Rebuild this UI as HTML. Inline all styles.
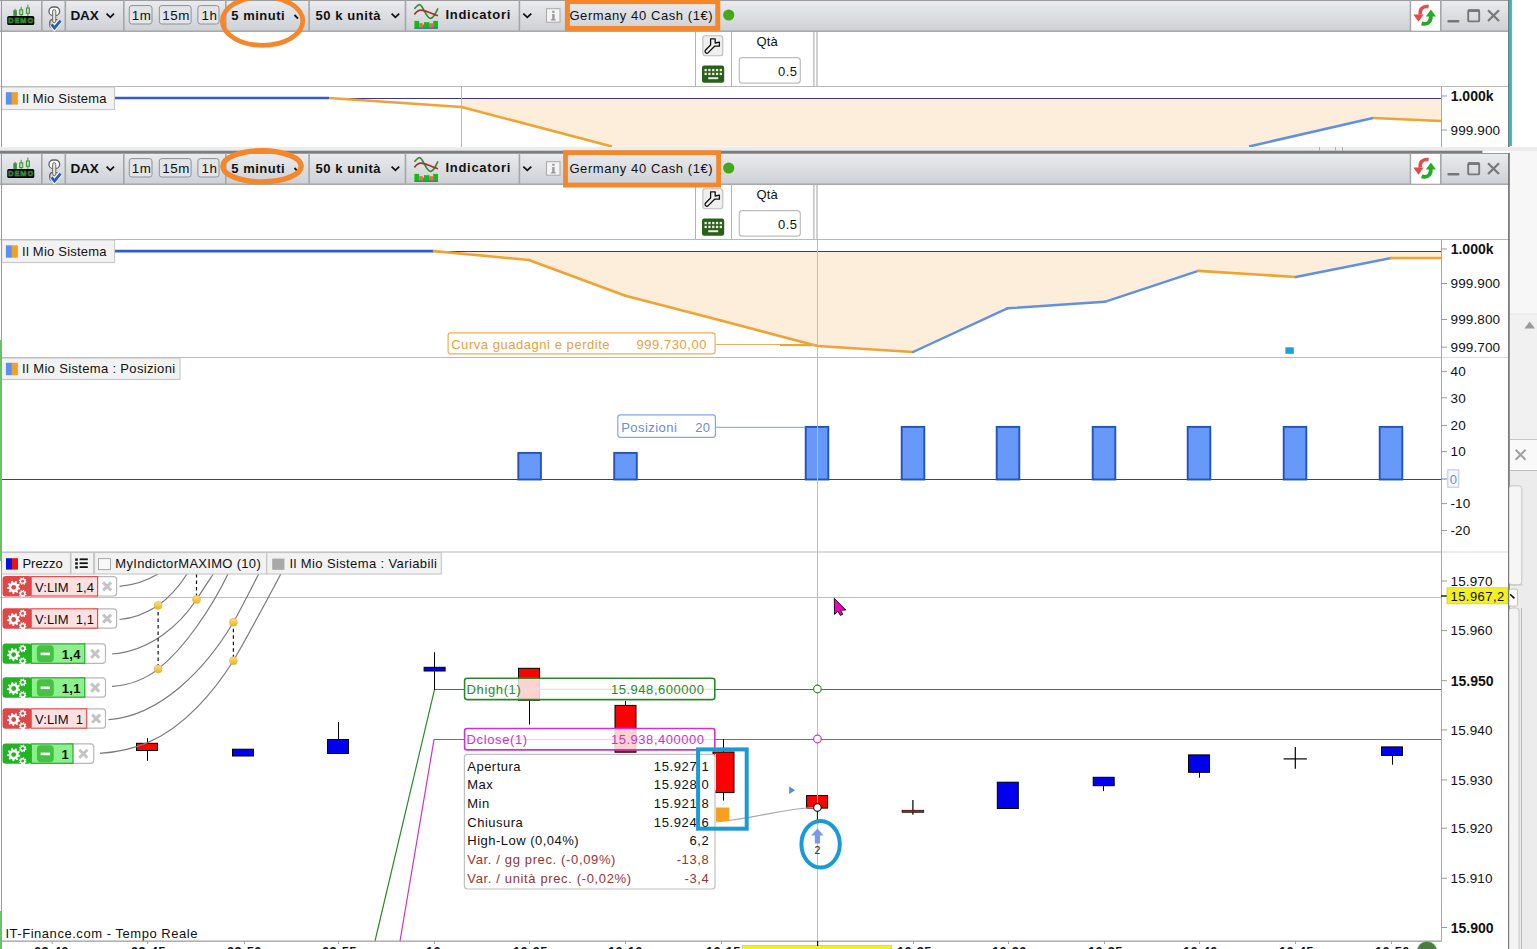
<!DOCTYPE html>
<html><head><meta charset="utf-8"><style>
html,body{margin:0;padding:0;width:1537px;height:949px;overflow:hidden;background:#fff;}
svg{position:absolute;display:block;}
text{font-family:"Liberation Sans",sans-serif;}
</style></head><body>
<div style="position:absolute;left:1510px;top:147px;width:27px;height:802px;background:#f3f3f3"></div>
<svg style="left:0;top:0" width="1537" height="147" viewBox="0 0 1537 147"><defs>
<linearGradient id="tbg" x1="0" y1="0" x2="0" y2="1"><stop offset="0" stop-color="#eaecef"/><stop offset="1" stop-color="#cdd0d4"/></linearGradient>
<linearGradient id="dot" x1="0" y1="0" x2="0" y2="1"><stop offset="0" stop-color="#ffe080"/><stop offset="1" stop-color="#f0b020"/></linearGradient>
</defs>
<rect x="0" y="0" width="1510" height="31.5" fill="url(#tbg)"/><rect x="0" y="0" width="1510" height="1" fill="#9c9c9c"/><rect x="0" y="30.6" width="1510" height="1.2" fill="#9a9a9a"/><rect x="41" y="0" width="1.6" height="31" fill="#a4a6a9"/><rect x="64.5" y="0" width="1.6" height="31" fill="#a4a6a9"/><rect x="123" y="0" width="1.6" height="31" fill="#a4a6a9"/><rect x="225" y="0" width="1.6" height="31" fill="#a4a6a9"/><rect x="308.3" y="0" width="1.6" height="31" fill="#a4a6a9"/><rect x="404.7" y="0" width="1.6" height="31" fill="#a4a6a9"/><rect x="518.6" y="0" width="1.6" height="31" fill="#a4a6a9"/><rect x="1409.7" y="0" width="1.6" height="31" fill="#a4a6a9"/><rect x="1440" y="0" width="1.6" height="31" fill="#a4a6a9"/><rect x="7.2" y="15.9" width="27.1" height="9.2" rx="1.6" fill="#0a0a0a"/><text x="21.2" y="23.4" font-size="7.4" font-weight="bold" fill="#1c3c1c" stroke="#3f963f" stroke-width="0.6" text-anchor="middle" letter-spacing="0.9">DEMO</text><rect x="14.6" y="8.8" width="1" height="7" fill="#3f8f3f"/><rect x="13.3" y="10.2" width="3.6" height="5.7" fill="#3f8f3f"/><rect x="20.7" y="6.8" width="1" height="9" fill="#3f8f3f"/><rect x="19.7" y="9.8" width="3" height="4.8" fill="#a8e8a0" stroke="#3f8f3f" stroke-width="1"/><rect x="27.4" y="4.6" width="1" height="11.2" fill="#3f8f3f"/><rect x="26.4" y="8" width="3" height="5.3" fill="#a8e8a0" stroke="#3f8f3f" stroke-width="1"/><rect x="49" y="7" width="10.6" height="8.6" rx="4.2" fill="#fff" stroke="#606060" stroke-width="1.3"/><path d="M57.5,19.6 L52,19.6 C49,19.6 49,27.6 52,27.6" fill="none" stroke="#606060" stroke-width="1.3"/><rect x="52.6" y="9.6" width="3.2" height="13" rx="1.6" fill="#e4e4dc" stroke="#707070" stroke-width="1"/><polyline points="51.6,24.4 54.5,28 60.6,20.6" fill="none" stroke="#fff" stroke-width="4.6"/><polyline points="51.6,24.4 54.5,28 60.6,20.6" fill="none" stroke="#2a5cbf" stroke-width="2.8"/><text x="70.5" y="19.8" font-size="13.6" font-weight="bold" fill="#111" letter-spacing="-0.25" xml:space="preserve">DAX</text><polyline points="106.6,13.6 110.3,17.3 114,13.6" fill="none" stroke="#111" stroke-width="1.8"/><rect x="129.3" y="5.6" width="22.69999999999999" height="18.4" rx="2.5" fill="#e2e4e7" stroke="#8e9093" stroke-width="1"/><text x="141.65" y="19.9" font-size="13.4" fill="#111" text-anchor="middle" letter-spacing="0.6" xml:space="preserve">1m</text><rect x="159.3" y="5.6" width="31.799999999999983" height="18.4" rx="2.5" fill="#e2e4e7" stroke="#8e9093" stroke-width="1"/><text x="176.2" y="19.9" font-size="13.4" fill="#111" text-anchor="middle" letter-spacing="0.6" xml:space="preserve">15m</text><rect x="197.9" y="5.6" width="21.099999999999994" height="18.4" rx="2.5" fill="#e2e4e7" stroke="#8e9093" stroke-width="1"/><text x="209.45" y="19.9" font-size="13.4" fill="#111" text-anchor="middle" letter-spacing="0.6" xml:space="preserve">1h</text><text x="231.3" y="19.9" font-size="13" font-weight="bold" fill="#111" letter-spacing="0.5" xml:space="preserve">5 minuti</text><polyline points="294.5,15 298,18.6" fill="none" stroke="#111" stroke-width="1.8"/><text x="315.6" y="19.9" font-size="13" font-weight="bold" fill="#111" letter-spacing="0.55" xml:space="preserve">50 k unità</text><polyline points="391.6,13.6 395.4,17.3 399.2,13.6" fill="none" stroke="#111" stroke-width="1.8"/><path d="M414.4,8.8 C416.5,6.5 418,4.7 419.5,4.7 C423,4.7 426,18.4 430.6,18.4 C434,18.4 436,12 438,8.4" fill="none" stroke="#2f8f2f" stroke-width="1.7"/><path d="M414.4,14.5 C416,12 418.5,10.1 421,10.1 C426,10.1 432,14.5 438,15.7" fill="none" stroke="#a83030" stroke-width="1.6"/><rect x="414.4" y="20.9" width="4.8" height="7" fill="#10c010"/><rect x="419.2" y="23.2" width="3.6" height="4.7" fill="#f06060"/><rect x="422.8" y="24.6" width="7" height="3.3" fill="#10c010"/><rect x="424" y="22.2" width="5.5" height="3" fill="#10c010"/><rect x="429.8" y="23.2" width="3.4" height="4.7" fill="#f06060"/><rect x="433.2" y="20.9" width="4.8" height="7" fill="#10c010"/><rect x="414.4" y="27.6" width="23.6" height="1.2" fill="#206a8a"/><text x="445.5" y="18.9" font-size="13" font-weight="bold" fill="#111" letter-spacing="0.7" xml:space="preserve">Indicatori</text><polyline points="523.3,13.6 527.3,17.3 531.3,13.6" fill="none" stroke="#111" stroke-width="1.8"/><rect x="546.5" y="8.7" width="13.5" height="13.5" fill="#f4f4f4" stroke="#a8a8a8" stroke-width="1"/><rect x="552.2" y="14" width="2.4" height="6.2" fill="#9a9a9a"/><rect x="552.2" y="10.8" width="2.4" height="2" fill="#9a9a9a"/><rect x="550.8" y="19.2" width="5" height="1.2" fill="#9a9a9a"/><text x="569.4" y="20" font-size="13" fill="#111" letter-spacing="0.58" xml:space="preserve">Germany 40 Cash (1€)</text><circle cx="728.7" cy="15" r="5.6" fill="#44a818"/><rect x="1411.3" y="1" width="28.7" height="29.6" fill="#fff"/><path d="M1428.6,6.6 C1422,5.6 1419.5,10 1420.4,14.6" fill="none" stroke="#e05050" stroke-width="3.6"/><polygon points="1413.4,14.6 1423.6,14.6 1418.5,21.8" fill="#e84848"/><path d="M1421.6,23.4 C1429,25.6 1431.6,20 1430.6,15" fill="none" stroke="#28a828" stroke-width="3.8"/><polygon points="1425.8,16.4 1436,16.4 1430.9,9.6" fill="#22b022"/><rect x="1447.4" y="20" width="12" height="2.4" rx="1" fill="#777"/><rect x="1468.2" y="10.2" width="11" height="11.2" rx="1" fill="none" stroke="#777" stroke-width="1.9"/><rect x="1468" y="9.4" width="11.4" height="2.6" fill="#777"/><path d="M1488,10.2 L1499,21 M1499,10.2 L1488,21" stroke="#777" stroke-width="2.2"/><rect x="695" y="31.5" width="1" height="55" fill="#b4b4b4"/><rect x="731" y="31.5" width="1" height="55" fill="#b4b4b4"/><rect x="813.3" y="31.5" width="1.2" height="55" fill="#b4b4b4"/><rect x="816.4" y="31.5" width="1.2" height="55" fill="#b4b4b4"/><rect x="0" y="86" width="1510" height="1" fill="#b8b8b8"/><rect x="702.8" y="35.8" width="20" height="20" rx="2.5" fill="#efefef" stroke="#bdbdbd" stroke-width="1.1"/><path d="M710.6,38.8 L715.2,38.8 L715.2,43 L719.4,42.2 L719.4,46.2 L714.6,46.2 L708.2,52.6 A1.7,1.7 0 0 1 705.6,50 L710.6,45 Z" fill="none" stroke="#111" stroke-width="1.3" stroke-linejoin="round"/><rect x="702" y="65.5" width="22.2" height="17.3" rx="2.2" fill="#2a5e1c"/><rect x="704.5" y="68.9" width="2.3" height="2.3" fill="#e8f0e0"/><rect x="708.3" y="68.9" width="2.3" height="2.3" fill="#e8f0e0"/><rect x="712.1" y="68.9" width="2.3" height="2.3" fill="#e8f0e0"/><rect x="715.9" y="68.9" width="2.3" height="2.3" fill="#e8f0e0"/><rect x="719.7" y="68.9" width="2.3" height="2.3" fill="#e8f0e0"/><rect x="704.5" y="72.8" width="2.3" height="2.3" fill="#e8f0e0"/><rect x="708.3" y="72.8" width="2.3" height="2.3" fill="#e8f0e0"/><rect x="712.1" y="72.8" width="2.3" height="2.3" fill="#e8f0e0"/><rect x="715.9" y="72.8" width="2.3" height="2.3" fill="#e8f0e0"/><rect x="719.7" y="72.8" width="2.3" height="2.3" fill="#e8f0e0"/><rect x="708.2" y="77.2" width="10" height="2" fill="#e8f0e0"/><text x="767.2" y="45.7" font-size="13" fill="#111" text-anchor="middle" letter-spacing="0.2" xml:space="preserve">Qtà</text><rect x="739.3" y="57.7" width="61" height="25.5" rx="3" fill="#fff" stroke="#bdbdbd" stroke-width="1.2"/><text x="797.6" y="75.7" font-size="13" fill="#111" text-anchor="end" letter-spacing="0.5" xml:space="preserve">0.5</text><polygon points="461.5,98 461.5,107 612,146.5 1249,146.5 1373,118 1441,121 1441,98" fill="#fdeedb"/><line x1="114" y1="98.5" x2="1441" y2="98.5" stroke="#3c3490" stroke-width="1"/><line x1="114" y1="98" x2="329" y2="98" stroke="#3558d0" stroke-width="2.6"/><polyline points="329,98 461.5,107 612,146.5" fill="none" stroke="#f0a232" stroke-width="2.6"/><polyline points="1249,146.5 1373,118" fill="none" stroke="#6090e0" stroke-width="2.6"/><polyline points="1373,118 1441,121" fill="none" stroke="#f0a232" stroke-width="2.6"/><line x1="461.5" y1="87" x2="461.5" y2="147" stroke="#e8a0a0" stroke-width="1"/><rect x="1441" y="87" width="1" height="60" fill="#a8a8a8"/><rect x="1441" y="95.5" width="6" height="1" fill="#999"/><text x="1450.7" y="101.1" font-size="14" font-weight="bold" fill="#111" xml:space="preserve">1.000k</text><rect x="1441" y="129.5" width="6" height="1" fill="#999"/><text x="1450.5" y="134.8" font-size="13.5" fill="#111" letter-spacing="0.12" xml:space="preserve">999.900</text><rect x="1.6" y="87" width="113" height="22.6" fill="#f2f2f2" stroke="#c2c2c2" stroke-width="1"/><rect x="5.9" y="92.2" width="6" height="12.4" fill="#5a90f0"/><rect x="11.9" y="92.2" width="6" height="12.4" fill="#f5a025"/><text x="22.1" y="103" font-size="13" fill="#111" letter-spacing="0.22" xml:space="preserve">Il Mio Sistema</text><rect x="1" y="0" width="1" height="147" fill="#9a9a9a"/><rect x="1508" y="0" width="1.8" height="147" fill="#7a7a7a"/>
<rect x="1509.2" y="0" width="2.7" height="146" fill="#2bc0ab"/>
</svg>
<svg style="left:0;top:147px" width="1537" height="6" viewBox="0 0 1537 6">
<rect x="0" y="0" width="1537" height="4" fill="#ececec"/>
<rect x="0" y="3.7" width="1482.4" height="2.4" fill="#7e7e7e"/>
<rect x="1319" y="0" width="1" height="4" fill="#b0b0b0"/><rect x="1335" y="0" width="1" height="4" fill="#b0b0b0"/><rect x="1342" y="0" width="1" height="4" fill="#b0b0b0"/>
</svg>
<svg style="left:0;top:153px" width="1537" height="796" viewBox="0 0 1537 796"><defs>
<linearGradient id="tbg2" x1="0" y1="0" x2="0" y2="1"><stop offset="0" stop-color="#eaecef"/><stop offset="1" stop-color="#cdd0d4"/></linearGradient>
<linearGradient id="dot2" x1="0" y1="0" x2="0" y2="1"><stop offset="0" stop-color="#ffe080"/><stop offset="1" stop-color="#f0b020"/></linearGradient>
</defs>
<rect x="0" y="0" width="1510" height="31.5" fill="url(#tbg2)"/><rect x="0" y="0" width="1510" height="1" fill="#9c9c9c"/><rect x="0" y="30.6" width="1510" height="1.2" fill="#9a9a9a"/><rect x="41" y="0" width="1.6" height="31" fill="#a4a6a9"/><rect x="64.5" y="0" width="1.6" height="31" fill="#a4a6a9"/><rect x="123" y="0" width="1.6" height="31" fill="#a4a6a9"/><rect x="225" y="0" width="1.6" height="31" fill="#a4a6a9"/><rect x="308.3" y="0" width="1.6" height="31" fill="#a4a6a9"/><rect x="404.7" y="0" width="1.6" height="31" fill="#a4a6a9"/><rect x="518.6" y="0" width="1.6" height="31" fill="#a4a6a9"/><rect x="1409.7" y="0" width="1.6" height="31" fill="#a4a6a9"/><rect x="1440" y="0" width="1.6" height="31" fill="#a4a6a9"/><rect x="7.2" y="15.9" width="27.1" height="9.2" rx="1.6" fill="#0a0a0a"/><text x="21.2" y="23.4" font-size="7.4" font-weight="bold" fill="#1c3c1c" stroke="#3f963f" stroke-width="0.6" text-anchor="middle" letter-spacing="0.9">DEMO</text><rect x="14.6" y="8.8" width="1" height="7" fill="#3f8f3f"/><rect x="13.3" y="10.2" width="3.6" height="5.7" fill="#3f8f3f"/><rect x="20.7" y="6.8" width="1" height="9" fill="#3f8f3f"/><rect x="19.7" y="9.8" width="3" height="4.8" fill="#a8e8a0" stroke="#3f8f3f" stroke-width="1"/><rect x="27.4" y="4.6" width="1" height="11.2" fill="#3f8f3f"/><rect x="26.4" y="8" width="3" height="5.3" fill="#a8e8a0" stroke="#3f8f3f" stroke-width="1"/><rect x="49" y="7" width="10.6" height="8.6" rx="4.2" fill="#fff" stroke="#606060" stroke-width="1.3"/><path d="M57.5,19.6 L52,19.6 C49,19.6 49,27.6 52,27.6" fill="none" stroke="#606060" stroke-width="1.3"/><rect x="52.6" y="9.6" width="3.2" height="13" rx="1.6" fill="#e4e4dc" stroke="#707070" stroke-width="1"/><polyline points="51.6,24.4 54.5,28 60.6,20.6" fill="none" stroke="#fff" stroke-width="4.6"/><polyline points="51.6,24.4 54.5,28 60.6,20.6" fill="none" stroke="#2a5cbf" stroke-width="2.8"/><text x="70.5" y="19.8" font-size="13.6" font-weight="bold" fill="#111" letter-spacing="-0.25" xml:space="preserve">DAX</text><polyline points="106.6,13.6 110.3,17.3 114,13.6" fill="none" stroke="#111" stroke-width="1.8"/><rect x="129.3" y="5.6" width="22.69999999999999" height="18.4" rx="2.5" fill="#e2e4e7" stroke="#8e9093" stroke-width="1"/><text x="141.65" y="19.9" font-size="13.4" fill="#111" text-anchor="middle" letter-spacing="0.6" xml:space="preserve">1m</text><rect x="159.3" y="5.6" width="31.799999999999983" height="18.4" rx="2.5" fill="#e2e4e7" stroke="#8e9093" stroke-width="1"/><text x="176.2" y="19.9" font-size="13.4" fill="#111" text-anchor="middle" letter-spacing="0.6" xml:space="preserve">15m</text><rect x="197.9" y="5.6" width="21.099999999999994" height="18.4" rx="2.5" fill="#e2e4e7" stroke="#8e9093" stroke-width="1"/><text x="209.45" y="19.9" font-size="13.4" fill="#111" text-anchor="middle" letter-spacing="0.6" xml:space="preserve">1h</text><text x="231.3" y="19.9" font-size="13" font-weight="bold" fill="#111" letter-spacing="0.5" xml:space="preserve">5 minuti</text><polyline points="294.5,15 298,18.6" fill="none" stroke="#111" stroke-width="1.8"/><text x="315.6" y="19.9" font-size="13" font-weight="bold" fill="#111" letter-spacing="0.55" xml:space="preserve">50 k unità</text><polyline points="391.6,13.6 395.4,17.3 399.2,13.6" fill="none" stroke="#111" stroke-width="1.8"/><path d="M414.4,8.8 C416.5,6.5 418,4.7 419.5,4.7 C423,4.7 426,18.4 430.6,18.4 C434,18.4 436,12 438,8.4" fill="none" stroke="#2f8f2f" stroke-width="1.7"/><path d="M414.4,14.5 C416,12 418.5,10.1 421,10.1 C426,10.1 432,14.5 438,15.7" fill="none" stroke="#a83030" stroke-width="1.6"/><rect x="414.4" y="20.9" width="4.8" height="7" fill="#10c010"/><rect x="419.2" y="23.2" width="3.6" height="4.7" fill="#f06060"/><rect x="422.8" y="24.6" width="7" height="3.3" fill="#10c010"/><rect x="424" y="22.2" width="5.5" height="3" fill="#10c010"/><rect x="429.8" y="23.2" width="3.4" height="4.7" fill="#f06060"/><rect x="433.2" y="20.9" width="4.8" height="7" fill="#10c010"/><rect x="414.4" y="27.6" width="23.6" height="1.2" fill="#206a8a"/><text x="445.5" y="18.9" font-size="13" font-weight="bold" fill="#111" letter-spacing="0.7" xml:space="preserve">Indicatori</text><polyline points="523.3,13.6 527.3,17.3 531.3,13.6" fill="none" stroke="#111" stroke-width="1.8"/><rect x="546.5" y="8.7" width="13.5" height="13.5" fill="#f4f4f4" stroke="#a8a8a8" stroke-width="1"/><rect x="552.2" y="14" width="2.4" height="6.2" fill="#9a9a9a"/><rect x="552.2" y="10.8" width="2.4" height="2" fill="#9a9a9a"/><rect x="550.8" y="19.2" width="5" height="1.2" fill="#9a9a9a"/><text x="569.4" y="20" font-size="13" fill="#111" letter-spacing="0.58" xml:space="preserve">Germany 40 Cash (1€)</text><circle cx="728.7" cy="15" r="5.6" fill="#44a818"/><rect x="1411.3" y="1" width="28.7" height="29.6" fill="#fff"/><path d="M1428.6,6.6 C1422,5.6 1419.5,10 1420.4,14.6" fill="none" stroke="#e05050" stroke-width="3.6"/><polygon points="1413.4,14.6 1423.6,14.6 1418.5,21.8" fill="#e84848"/><path d="M1421.6,23.4 C1429,25.6 1431.6,20 1430.6,15" fill="none" stroke="#28a828" stroke-width="3.8"/><polygon points="1425.8,16.4 1436,16.4 1430.9,9.6" fill="#22b022"/><rect x="1447.4" y="20" width="12" height="2.4" rx="1" fill="#777"/><rect x="1468.2" y="10.2" width="11" height="11.2" rx="1" fill="none" stroke="#777" stroke-width="1.9"/><rect x="1468" y="9.4" width="11.4" height="2.6" fill="#777"/><path d="M1488,10.2 L1499,21 M1499,10.2 L1488,21" stroke="#777" stroke-width="2.2"/><rect x="695" y="31.5" width="1" height="55" fill="#b4b4b4"/><rect x="731" y="31.5" width="1" height="55" fill="#b4b4b4"/><rect x="813.3" y="31.5" width="1.2" height="55" fill="#b4b4b4"/><rect x="816.4" y="31.5" width="1.2" height="55" fill="#b4b4b4"/><rect x="0" y="86" width="1510" height="1" fill="#b8b8b8"/><rect x="702.8" y="35.8" width="20" height="20" rx="2.5" fill="#efefef" stroke="#bdbdbd" stroke-width="1.1"/><path d="M710.6,38.8 L715.2,38.8 L715.2,43 L719.4,42.2 L719.4,46.2 L714.6,46.2 L708.2,52.6 A1.7,1.7 0 0 1 705.6,50 L710.6,45 Z" fill="none" stroke="#111" stroke-width="1.3" stroke-linejoin="round"/><rect x="702" y="65.5" width="22.2" height="17.3" rx="2.2" fill="#2a5e1c"/><rect x="704.5" y="68.9" width="2.3" height="2.3" fill="#e8f0e0"/><rect x="708.3" y="68.9" width="2.3" height="2.3" fill="#e8f0e0"/><rect x="712.1" y="68.9" width="2.3" height="2.3" fill="#e8f0e0"/><rect x="715.9" y="68.9" width="2.3" height="2.3" fill="#e8f0e0"/><rect x="719.7" y="68.9" width="2.3" height="2.3" fill="#e8f0e0"/><rect x="704.5" y="72.8" width="2.3" height="2.3" fill="#e8f0e0"/><rect x="708.3" y="72.8" width="2.3" height="2.3" fill="#e8f0e0"/><rect x="712.1" y="72.8" width="2.3" height="2.3" fill="#e8f0e0"/><rect x="715.9" y="72.8" width="2.3" height="2.3" fill="#e8f0e0"/><rect x="719.7" y="72.8" width="2.3" height="2.3" fill="#e8f0e0"/><rect x="708.2" y="77.2" width="10" height="2" fill="#e8f0e0"/><text x="767.2" y="45.7" font-size="13" fill="#111" text-anchor="middle" letter-spacing="0.2" xml:space="preserve">Qtà</text><rect x="739.3" y="57.7" width="61" height="25.5" rx="3" fill="#fff" stroke="#bdbdbd" stroke-width="1.2"/><text x="797.6" y="75.7" font-size="13" fill="#111" text-anchor="end" letter-spacing="0.5" xml:space="preserve">0.5</text>
<g transform="translate(0,-153)"><polygon points="480,251.1 434,251.1 528.8,260 625.4,295.8 721,320.5 817.5,346 913,352 1007.3,308.3 1104.7,301.8 1198.3,270.9 1295.7,277 1391.2,258 1441,258 1441,251.1" fill="#fdeedb"/><line x1="114" y1="251.5" x2="1441" y2="251.5" stroke="#3c3490" stroke-width="1"/><line x1="114" y1="251.1" x2="434" y2="251.1" stroke="#3558d0" stroke-width="2.6"/><line x1="434" y1="251.1" x2="528.8" y2="260" stroke="#f0a232" stroke-width="2.6" stroke-linecap="round"/><line x1="528.8" y1="260" x2="625.4" y2="295.8" stroke="#f0a232" stroke-width="2.6" stroke-linecap="round"/><line x1="625.4" y1="295.8" x2="721" y2="320.5" stroke="#f0a232" stroke-width="2.6" stroke-linecap="round"/><line x1="721" y1="320.5" x2="817.5" y2="346" stroke="#f0a232" stroke-width="2.6" stroke-linecap="round"/><line x1="817.5" y1="346" x2="913" y2="352" stroke="#f0a232" stroke-width="2.6" stroke-linecap="round"/><line x1="913" y1="352" x2="1007.3" y2="308.3" stroke="#6090e0" stroke-width="2.4" stroke-linecap="round"/><line x1="1007.3" y1="308.3" x2="1104.7" y2="301.8" stroke="#6090e0" stroke-width="2.4" stroke-linecap="round"/><line x1="1104.7" y1="301.8" x2="1198.3" y2="270.9" stroke="#6090e0" stroke-width="2.4" stroke-linecap="round"/><line x1="1198.3" y1="270.9" x2="1295.7" y2="277" stroke="#f0a232" stroke-width="2.6" stroke-linecap="round"/><line x1="1295.7" y1="277" x2="1391.2" y2="258" stroke="#6090e0" stroke-width="2.4" stroke-linecap="round"/><line x1="1391.2" y1="258" x2="1441" y2="258" stroke="#f0a232" stroke-width="2.6" stroke-linecap="round"/><rect x="1285.4" y="347.3" width="8.4" height="6.5" fill="#1aa0e0"/><line x1="715.6" y1="344.5" x2="817.5" y2="344.5" stroke="#e8ac60" stroke-width="1"/><line x1="780" y1="345" x2="812" y2="345.3" stroke="#f0a232" stroke-width="2"/><rect x="448.1" y="332.8" width="267" height="21" rx="2.5" fill="#fff" stroke="#f0b050" stroke-width="1.2"/><text x="451.2" y="348.6" font-size="13" fill="#e8a040" letter-spacing="0.54" xml:space="preserve">Curva guadagni e perdite</text><text x="707" y="348.6" font-size="13" fill="#e8a040" text-anchor="end" letter-spacing="0.55" xml:space="preserve">999.730,00</text><rect x="0" y="357" width="1441" height="1" fill="#b8b8b8"/><rect x="1441" y="357" width="68" height="1" fill="#dcdcdc"/><rect x="0" y="551.5" width="1441" height="1" fill="#b8b8b8"/><rect x="1441" y="551.5" width="68" height="1" fill="#dcdcdc"/><rect x="1441" y="239.5" width="1" height="701" fill="#a8a8a8"/><rect x="1441" y="248.5" width="6" height="1" fill="#999"/><text x="1450.7" y="254.1" font-size="14" font-weight="bold" fill="#111" xml:space="preserve">1.000k</text><rect x="1441" y="283.0" width="6" height="1" fill="#999"/><text x="1450.5" y="288.3" font-size="13.5" fill="#111" letter-spacing="0.12" xml:space="preserve">999.900</text><rect x="1441" y="319.0" width="6" height="1" fill="#999"/><text x="1450.5" y="324.3" font-size="13.5" fill="#111" letter-spacing="0.12" xml:space="preserve">999.800</text><rect x="1441" y="346.7" width="6" height="1" fill="#999"/><text x="1450.5" y="352.0" font-size="13.5" fill="#111" letter-spacing="0.12" xml:space="preserve">999.700</text><rect x="1.6" y="240" width="113" height="22.6" fill="#f2f2f2" stroke="#c2c2c2" stroke-width="1"/><rect x="5.9" y="245.3" width="6" height="12.4" fill="#5a90f0"/><rect x="11.9" y="245.3" width="6" height="12.4" fill="#f5a025"/><text x="22.1" y="256.3" font-size="13" fill="#111" letter-spacing="0.22" xml:space="preserve">Il Mio Sistema</text><line x1="0" y1="479.5" x2="1441" y2="479.5" stroke="#3a3aa0" stroke-width="1.2"/><rect x="518.3000000000001" y="452.9" width="22.6" height="26.6" fill="#6699f8" stroke="#2552c0" stroke-width="1.9"/><rect x="614.2" y="452.9" width="22.6" height="26.6" fill="#6699f8" stroke="#2552c0" stroke-width="1.9"/><rect x="805.7" y="426.9" width="22.6" height="52.6" fill="#6699f8" stroke="#2552c0" stroke-width="1.9"/><rect x="901.7" y="426.9" width="22.6" height="52.6" fill="#6699f8" stroke="#2552c0" stroke-width="1.9"/><rect x="996.7" y="426.9" width="22.6" height="52.6" fill="#6699f8" stroke="#2552c0" stroke-width="1.9"/><rect x="1092.7" y="426.9" width="22.6" height="52.6" fill="#6699f8" stroke="#2552c0" stroke-width="1.9"/><rect x="1187.7" y="426.9" width="22.6" height="52.6" fill="#6699f8" stroke="#2552c0" stroke-width="1.9"/><rect x="1283.7" y="426.9" width="22.6" height="52.6" fill="#6699f8" stroke="#2552c0" stroke-width="1.9"/><rect x="1379.7" y="426.9" width="22.6" height="52.6" fill="#6699f8" stroke="#2552c0" stroke-width="1.9"/><line x1="715.7" y1="427.3" x2="805.3" y2="427.3" stroke="#7aa0e0" stroke-width="1"/><rect x="617.8" y="414.9" width="97.6" height="22.4" rx="2.5" fill="#fff" stroke="#80a8f0" stroke-width="1.2"/><text x="621.2" y="431.6" font-size="13" fill="#6a8ed8" letter-spacing="0.45" xml:space="preserve">Posizioni</text><text x="710.6" y="431.6" font-size="13" fill="#6a8ed8" text-anchor="end" letter-spacing="0.5" xml:space="preserve">20</text><rect x="1441" y="370.9" width="6" height="1" fill="#999"/><text x="1450.5" y="376.2" font-size="13.5" fill="#111" letter-spacing="0.12" xml:space="preserve">40</text><rect x="1441" y="397.3" width="6" height="1" fill="#999"/><text x="1450.5" y="402.6" font-size="13.5" fill="#111" letter-spacing="0.12" xml:space="preserve">30</text><rect x="1441" y="424.9" width="6" height="1" fill="#999"/><text x="1450.5" y="430.2" font-size="13.5" fill="#111" letter-spacing="0.12" xml:space="preserve">20</text><rect x="1441" y="451.1" width="6" height="1" fill="#999"/><text x="1450.5" y="456.40000000000003" font-size="13.5" fill="#111" letter-spacing="0.12" xml:space="preserve">10</text><rect x="1441" y="503.1" width="6" height="1" fill="#999"/><text x="1450.5" y="508.40000000000003" font-size="13.5" fill="#111" letter-spacing="0.12" xml:space="preserve">-10</text><rect x="1441" y="530.0" width="6" height="1" fill="#999"/><text x="1450.5" y="535.3" font-size="13.5" fill="#111" letter-spacing="0.12" xml:space="preserve">-20</text><rect x="1441" y="478.5" width="6" height="1" fill="#6680c0"/><rect x="1447.8" y="469.8" width="11" height="17.4" fill="#f4f6fa" stroke="#b8c4dc" stroke-width="1"/><text x="1453.3" y="483.6" font-size="13" fill="#7090d0" text-anchor="middle" xml:space="preserve">0</text><rect x="1.6" y="358" width="178.4" height="21.4" fill="#f2f2f2" stroke="#c2c2c2" stroke-width="1"/><rect x="5.9" y="362.8" width="6" height="12.4" fill="#5a90f0"/><rect x="11.9" y="362.8" width="6" height="12.4" fill="#f5a025"/><text x="22.1" y="372.9" font-size="13" fill="#111" letter-spacing="0.34" xml:space="preserve">Il Mio Sistema : Posizioni</text><line x1="0" y1="597.5" x2="1441" y2="597.5" stroke="#f0a8a8" stroke-width="1"/><line x1="434.6" y1="689.5" x2="1441" y2="689.5" stroke="#2a8a2a" stroke-width="1.2"/><line x1="434.6" y1="689.1" x2="375" y2="941" stroke="#2a8a2a" stroke-width="1.2"/><line x1="434" y1="739.5" x2="1441" y2="739.5" stroke="#d030d0" stroke-width="1.2"/><line x1="434" y1="739.6" x2="400" y2="941" stroke="#d030d0" stroke-width="1.2"/><line x1="147.5" y1="738.2" x2="147.5" y2="760.8" stroke="#000" stroke-width="1"/><rect x="136.5" y="743.3" width="21" height="7.2000000000000455" fill="#ff0000" stroke="#000" stroke-width="1"/><line x1="243.5" y1="749.2" x2="243.5" y2="756" stroke="#000" stroke-width="1"/><rect x="232.5" y="749.2" width="21" height="6.7999999999999545" fill="#0000ee" stroke="#000" stroke-width="1"/><line x1="338.5" y1="722" x2="338.5" y2="753.5" stroke="#000" stroke-width="1"/><rect x="327.5" y="739.5" width="21" height="14.0" fill="#0000ee" stroke="#000" stroke-width="1"/><line x1="434.5" y1="652.3" x2="434.5" y2="689.8" stroke="#000" stroke-width="1"/><rect x="424.1" y="667.3" width="21" height="3.7000000000000455" fill="#0000ee" stroke="#000" stroke-width="1"/><line x1="529.5" y1="668.3" x2="529.5" y2="724.5" stroke="#000" stroke-width="1"/><rect x="518.5" y="668.3" width="21" height="31.90000000000009" fill="#ff0000" stroke="#000" stroke-width="1"/><line x1="625.5" y1="700.8" x2="625.5" y2="752.2" stroke="#000" stroke-width="1"/><rect x="615.0" y="705.4" width="21" height="46.80000000000007" fill="#ff0000" stroke="#000" stroke-width="1"/><line x1="723.5" y1="739" x2="723.5" y2="800.6" stroke="#000" stroke-width="1"/><rect x="713.0" y="752" width="21" height="40.60000000000002" fill="#ff0000" stroke="#000" stroke-width="1"/><line x1="817.5" y1="791" x2="817.5" y2="812" stroke="#000" stroke-width="1"/><rect x="806.6" y="795.5" width="21" height="12.600000000000023" fill="#ff0000" stroke="#000" stroke-width="1"/><line x1="1007.5" y1="782.2" x2="1007.5" y2="808.5" stroke="#000" stroke-width="1"/><rect x="997.3" y="782.2" width="21" height="26.299999999999955" fill="#0000ee" stroke="#000" stroke-width="1"/><line x1="1103.5" y1="777.3" x2="1103.5" y2="791.1" stroke="#000" stroke-width="1"/><rect x="1093.2" y="777.3" width="21" height="8.400000000000091" fill="#0000ee" stroke="#000" stroke-width="1"/><line x1="1199.5" y1="754.9" x2="1199.5" y2="777.7" stroke="#000" stroke-width="1"/><rect x="1188.5" y="754.9" width="21" height="17.399999999999977" fill="#0000ee" stroke="#000" stroke-width="1"/><line x1="1392.5" y1="746.9" x2="1392.5" y2="764.7" stroke="#000" stroke-width="1"/><rect x="1381.5" y="746.9" width="21" height="8.5" fill="#0000ee" stroke="#000" stroke-width="1"/><line x1="912.9" y1="800" x2="912.9" y2="814.8" stroke="#000" stroke-width="1.2"/><rect x="902" y="810.2" width="21.8" height="2.2" fill="#b02020" stroke="#000" stroke-width="0.6"/><line x1="1295.3" y1="746.9" x2="1295.3" y2="768.8" stroke="#000" stroke-width="1.2"/><line x1="1283.6" y1="758.9" x2="1306.9" y2="758.9" stroke="#000" stroke-width="1.2"/><line x1="817.5" y1="239.5" x2="817.5" y2="949" stroke="#f0a8a8" stroke-width="1"/><rect x="464.6" y="678.2" width="250.2" height="21.4" rx="2.5" fill="rgba(255,255,255,0.82)" stroke="#2a8a2a" stroke-width="1.6"/><line x1="465" y1="689.1" x2="714" y2="689.1" stroke="#d8ecd8" stroke-width="1"/><text x="466.6" y="694" font-size="13" fill="#2a8a2a" letter-spacing="0.62" xml:space="preserve">Dhigh(1)</text><text x="704.6" y="694" font-size="13" fill="#2a8a2a" text-anchor="end" letter-spacing="0.53" xml:space="preserve">15.948,600000</text><rect x="464.6" y="728.5" width="250.2" height="21.4" rx="2.5" fill="rgba(255,255,255,0.82)" stroke="#d030d0" stroke-width="1.6"/><line x1="465" y1="739.6" x2="714" y2="739.6" stroke="#f4d0f4" stroke-width="1"/><text x="466.6" y="744.3" font-size="13" fill="#cc33cc" letter-spacing="0.62" xml:space="preserve">Dclose(1)</text><text x="704.6" y="744.3" font-size="13" fill="#cc33cc" text-anchor="end" letter-spacing="0.53" xml:space="preserve">15.938,400000</text><circle cx="817.4" cy="689" r="3.8" fill="#fff" stroke="#2a8a2a" stroke-width="1.2"/><circle cx="817.4" cy="739" r="3.8" fill="#fff" stroke="#d030d0" stroke-width="1.2"/><rect x="464.4" y="754.4" width="250.6" height="134.6" rx="3" fill="#fff" stroke="#c0c0c0" stroke-width="1.2"/><text x="467.3" y="770.8" font-size="13" fill="#111" letter-spacing="0.48" xml:space="preserve">Apertura</text><text x="709.4" y="770.8" font-size="13" fill="#111" text-anchor="end" letter-spacing="0.62" xml:space="preserve">15.927,1</text><text x="467.3" y="789.42" font-size="13" fill="#111" letter-spacing="0.48" xml:space="preserve">Max</text><text x="709.4" y="789.42" font-size="13" fill="#111" text-anchor="end" letter-spacing="0.62" xml:space="preserve">15.928,0</text><text x="467.3" y="808.04" font-size="13" fill="#111" letter-spacing="0.48" xml:space="preserve">Min</text><text x="709.4" y="808.04" font-size="13" fill="#111" text-anchor="end" letter-spacing="0.62" xml:space="preserve">15.921,8</text><text x="467.3" y="826.66" font-size="13" fill="#111" letter-spacing="0.48" xml:space="preserve">Chiusura</text><text x="709.4" y="826.66" font-size="13" fill="#111" text-anchor="end" letter-spacing="0.62" xml:space="preserve">15.924,6</text><text x="467.3" y="845.28" font-size="13" fill="#111" letter-spacing="0.48" xml:space="preserve">High-Low (0,04%)</text><text x="709.4" y="845.28" font-size="13" fill="#111" text-anchor="end" letter-spacing="0.62" xml:space="preserve">6,2</text><text x="467.3" y="863.9" font-size="13" fill="#993333" letter-spacing="0.64" xml:space="preserve">Var. / gg prec. (-0,09%)</text><text x="709.4" y="863.9" font-size="13" fill="#993333" text-anchor="end" letter-spacing="0.62" xml:space="preserve">-13,8</text><text x="467.3" y="882.52" font-size="13" fill="#993333" letter-spacing="0.64" xml:space="preserve">Var. / unità prec. (-0,02%)</text><text x="709.4" y="882.52" font-size="13" fill="#993333" text-anchor="end" letter-spacing="0.62" xml:space="preserve">-3,4</text><path d="M716,822 C760,818 780,809 813,807.5" fill="none" stroke="#a8a8a8" stroke-width="1.2"/><rect x="716" y="807.5" width="13.3" height="13.5" fill="#f5a020"/><rect x="715" y="754" width="1" height="36" fill="#eee"/><rect x="698.1" y="749.4" width="48.6" height="79.3" fill="none" stroke="#1a9ad6" stroke-width="4"/><circle cx="817.4" cy="807.5" r="3.8" fill="#fff" stroke="#111" stroke-width="1.2"/><line x1="817.4" y1="811.5" x2="817.4" y2="822" stroke="#111" stroke-width="1"/><polygon points="789.2,786.4 795,790.2 789.2,794" fill="#5588ee"/><polygon points="817.4,828.5 823.6,835.4 820,835.4 820,843.4 814.8,843.4 814.8,835.4 811.2,835.4" fill="#7a9ae8"/><text x="817.4" y="853.8" font-size="10.5" fill="#222" text-anchor="middle" xml:space="preserve">2</text><ellipse cx="820.6" cy="844.3" rx="19.2" ry="23.2" fill="none" stroke="#1a9ad6" stroke-width="4"/><polygon points="834.3,598.4 834.5,614.4 837.8,611.3 840.4,615.4 842.8,614.2 840.4,610.2 845.8,610" fill="#f000c0" stroke="#100010" stroke-width="0.9" stroke-linejoin="round"/><path d="M119.5,586.4 C135,585 148,580 158,574" fill="none" stroke="#7a7a7a" stroke-width="1.2"/><path d="M119.5,619.5 C135,618 148,612 158.1,605.4 C170,597 180,585 187,574" fill="none" stroke="#7a7a7a" stroke-width="1.2"/><path d="M112,654 C150,651 180,625 196.5,599.5 C202,591 208,582 213.3,574" fill="none" stroke="#7a7a7a" stroke-width="1.2"/><path d="M112,686.4 C132,685 148,677 158.1,669.1 C185,648 212,607 228,574" fill="none" stroke="#7a7a7a" stroke-width="1.2"/><path d="M108.5,719.7 C160,716 205,670 233.4,622.3 C242,607 252,587 258.7,574" fill="none" stroke="#7a7a7a" stroke-width="1.2"/><path d="M100,753.4 C120,752 135,748 147,742.9 C185,727 215,690 233.4,660.7 C250,632 268,598 280.8,574" fill="none" stroke="#7a7a7a" stroke-width="1.2"/><line x1="158.1" y1="605.4" x2="158.1" y2="669.1" stroke="#111" stroke-width="1.2" stroke-dasharray="3.5 3"/><line x1="196.5" y1="574" x2="196.5" y2="599.5" stroke="#111" stroke-width="1.2" stroke-dasharray="3.5 3"/><line x1="233.4" y1="622.3" x2="233.4" y2="660.7" stroke="#111" stroke-width="1.2" stroke-dasharray="3.5 3"/><circle cx="158.1" cy="605.4" r="4" fill="url(#dot2)" stroke="#e8b040" stroke-width="0.6"/><circle cx="196.5" cy="599.5" r="4" fill="url(#dot2)" stroke="#e8b040" stroke-width="0.6"/><circle cx="158.1" cy="669.1" r="4" fill="url(#dot2)" stroke="#e8b040" stroke-width="0.6"/><circle cx="233.4" cy="622.3" r="4" fill="url(#dot2)" stroke="#e8b040" stroke-width="0.6"/><circle cx="233.4" cy="660.7" r="4" fill="url(#dot2)" stroke="#e8b040" stroke-width="0.6"/><rect x="1.6" y="552.6" width="68.8" height="21.4" fill="#f2f2f2" stroke="#c2c2c2" stroke-width="1"/><rect x="6" y="558.2" width="6" height="11.4" fill="#0a10e0"/><rect x="12" y="558.2" width="6" height="11.4" fill="#f01010"/><text x="22.4" y="567.5" font-size="13" fill="#111" xml:space="preserve">Prezzo</text><rect x="71" y="552.6" width="22.6" height="21.4" fill="#f2f2f2" stroke="#c2c2c2" stroke-width="1"/><rect x="75.2" y="558.4" width="2.6" height="2.4" fill="#111"/><rect x="79.6" y="558.4" width="8.2" height="1.8" fill="#111"/><rect x="75.2" y="562.3" width="2.6" height="2.4" fill="#111"/><rect x="79.6" y="562.3" width="8.2" height="1.8" fill="#111"/><rect x="75.2" y="566.1999999999999" width="2.6" height="2.4" fill="#111"/><rect x="79.6" y="566.1999999999999" width="8.2" height="1.8" fill="#111"/><rect x="94.6" y="552.6" width="172" height="21.4" fill="#f2f2f2" stroke="#c2c2c2" stroke-width="1"/><rect x="98.5" y="558.6" width="12" height="11" fill="#f8f8f8" stroke="#a8a8a8" stroke-width="1"/><text x="115.3" y="567.5" font-size="13" fill="#111" letter-spacing="0.3" xml:space="preserve">MyIndictorMAXIMO (10)</text><rect x="266.8" y="552.6" width="174.5" height="21.4" fill="#f2f2f2" stroke="#c2c2c2" stroke-width="1"/><rect x="272.2" y="558.6" width="12.2" height="11.2" fill="#a8a8a8"/><text x="289.6" y="567.5" font-size="13" fill="#111" letter-spacing="0.38" xml:space="preserve">Il Mio Sistema : Variabili</text><rect x="89.6" y="576.6" width="27.0" height="19.4" rx="3" fill="#fff" stroke="#b8b8b8" stroke-width="1.2"/><rect x="31" y="576.6" width="66.6" height="19.4" fill="#ffe0e0" stroke="#e05050" stroke-width="1.2"/><rect x="2.5" y="576.1" width="29" height="20.4" rx="3" fill="#e04848"/><polygon points="18.60,587.30 20.25,588.13 19.90,589.56 18.06,589.54 17.45,590.45 18.18,592.14 17.00,593.02 15.60,591.82 14.55,592.13 14.02,593.89 12.55,593.80 12.25,591.98 11.25,591.54 9.71,592.56 8.64,591.54 9.58,589.95 9.10,588.98 7.26,588.76 7.10,587.30 8.84,586.69 9.10,585.62 7.83,584.28 8.64,583.06 10.37,583.70 11.25,583.06 11.14,581.22 12.55,580.80 13.46,582.41 14.55,582.47 15.65,581.00 17.00,581.58 16.66,583.40 17.45,584.15 19.25,583.72 19.90,585.04 18.48,586.21" fill="#fff"/><circle cx="13.7" cy="587.3000000000001" r="2.4" fill="#e04848"/><polygon points="25.60,581.20 26.56,581.75 26.30,582.69 25.20,582.68 24.75,583.25 25.04,584.32 24.19,584.80 23.42,584.01 22.70,584.10 22.15,585.06 21.21,584.80 21.22,583.70 20.65,583.25 19.58,583.54 19.10,582.69 19.89,581.92 19.80,581.20 18.84,580.65 19.10,579.71 20.20,579.72 20.65,579.15 20.36,578.08 21.21,577.60 21.98,578.39 22.70,578.30 23.25,577.34 24.19,577.60 24.18,578.70 24.75,579.15 25.82,578.86 26.30,579.71 25.51,580.48" fill="#fff"/><circle cx="22.7" cy="581.2" r="1.4" fill="#e04848"/><polygon points="25.60,593.70 26.56,594.25 26.30,595.19 25.20,595.18 24.75,595.75 25.04,596.82 24.19,597.30 23.42,596.51 22.70,596.60 22.15,597.56 21.21,597.30 21.22,596.20 20.65,595.75 19.58,596.04 19.10,595.19 19.89,594.42 19.80,593.70 18.84,593.15 19.10,592.21 20.20,592.22 20.65,591.65 20.36,590.58 21.21,590.10 21.98,590.89 22.70,590.80 23.25,589.84 24.19,590.10 24.18,591.20 24.75,591.65 25.82,591.36 26.30,592.21 25.51,592.98" fill="#fff"/><circle cx="22.7" cy="593.7" r="1.4" fill="#e04848"/><text x="35.1" y="591.9" font-size="13" fill="#111" xml:space="preserve">V:LIM  1,4</text><path d="M103.1,582.4 L111.1,590.4 M111.1,582.4 L103.1,590.4" stroke="#c4c4c4" stroke-width="3"/><rect x="89.6" y="608.8" width="27.0" height="19.4" rx="3" fill="#fff" stroke="#b8b8b8" stroke-width="1.2"/><rect x="31" y="608.8" width="66.6" height="19.4" fill="#ffe0e0" stroke="#e05050" stroke-width="1.2"/><rect x="2.5" y="608.3" width="29" height="20.4" rx="3" fill="#e04848"/><polygon points="18.60,619.50 20.25,620.33 19.90,621.76 18.06,621.74 17.45,622.65 18.18,624.34 17.00,625.22 15.60,624.02 14.55,624.33 14.02,626.09 12.55,626.00 12.25,624.18 11.25,623.74 9.71,624.76 8.64,623.74 9.58,622.15 9.10,621.18 7.26,620.96 7.10,619.50 8.84,618.89 9.10,617.82 7.83,616.48 8.64,615.26 10.37,615.90 11.25,615.26 11.14,613.42 12.55,613.00 13.46,614.61 14.55,614.67 15.65,613.20 17.00,613.78 16.66,615.60 17.45,616.35 19.25,615.92 19.90,617.24 18.48,618.41" fill="#fff"/><circle cx="13.7" cy="619.5" r="2.4" fill="#e04848"/><polygon points="25.60,613.40 26.56,613.95 26.30,614.89 25.20,614.88 24.75,615.45 25.04,616.52 24.19,617.00 23.42,616.21 22.70,616.30 22.15,617.26 21.21,617.00 21.22,615.90 20.65,615.45 19.58,615.74 19.10,614.89 19.89,614.12 19.80,613.40 18.84,612.85 19.10,611.91 20.20,611.92 20.65,611.35 20.36,610.28 21.21,609.80 21.98,610.59 22.70,610.50 23.25,609.54 24.19,609.80 24.18,610.90 24.75,611.35 25.82,611.06 26.30,611.91 25.51,612.68" fill="#fff"/><circle cx="22.7" cy="613.4" r="1.4" fill="#e04848"/><polygon points="25.60,625.90 26.56,626.45 26.30,627.39 25.20,627.38 24.75,627.95 25.04,629.02 24.19,629.50 23.42,628.71 22.70,628.80 22.15,629.76 21.21,629.50 21.22,628.40 20.65,627.95 19.58,628.24 19.10,627.39 19.89,626.62 19.80,625.90 18.84,625.35 19.10,624.41 20.20,624.42 20.65,623.85 20.36,622.78 21.21,622.30 21.98,623.09 22.70,623.00 23.25,622.04 24.19,622.30 24.18,623.40 24.75,623.85 25.82,623.56 26.30,624.41 25.51,625.18" fill="#fff"/><circle cx="22.7" cy="625.9" r="1.4" fill="#e04848"/><text x="35.1" y="624.0999999999999" font-size="13" fill="#111" xml:space="preserve">V:LIM  1,1</text><path d="M103.1,614.5999999999999 L111.1,622.5999999999999 M111.1,614.5999999999999 L103.1,622.5999999999999" stroke="#c4c4c4" stroke-width="3"/><rect x="76.8" y="643.9" width="28.700000000000003" height="19.4" rx="3" fill="#fff" stroke="#b8b8b8" stroke-width="1.2"/><rect x="31.2" y="643.9" width="53.599999999999994" height="19.4" fill="#8cf08c" stroke="#2aa82a" stroke-width="1.2"/><rect x="2.5" y="643.4" width="29" height="20.4" rx="3" fill="#22b422"/><polygon points="18.60,654.60 20.25,655.43 19.90,656.86 18.06,656.84 17.45,657.75 18.18,659.44 17.00,660.32 15.60,659.12 14.55,659.43 14.02,661.19 12.55,661.10 12.25,659.28 11.25,658.84 9.71,659.86 8.64,658.84 9.58,657.25 9.10,656.28 7.26,656.06 7.10,654.60 8.84,653.99 9.10,652.92 7.83,651.58 8.64,650.36 10.37,651.00 11.25,650.36 11.14,648.52 12.55,648.10 13.46,649.71 14.55,649.77 15.65,648.30 17.00,648.88 16.66,650.70 17.45,651.45 19.25,651.02 19.90,652.34 18.48,653.51" fill="#fff"/><circle cx="13.7" cy="654.6" r="2.4" fill="#22b422"/><polygon points="25.60,648.50 26.56,649.05 26.30,649.99 25.20,649.98 24.75,650.55 25.04,651.62 24.19,652.10 23.42,651.31 22.70,651.40 22.15,652.36 21.21,652.10 21.22,651.00 20.65,650.55 19.58,650.84 19.10,649.99 19.89,649.22 19.80,648.50 18.84,647.95 19.10,647.01 20.20,647.02 20.65,646.45 20.36,645.38 21.21,644.90 21.98,645.69 22.70,645.60 23.25,644.64 24.19,644.90 24.18,646.00 24.75,646.45 25.82,646.16 26.30,647.01 25.51,647.78" fill="#fff"/><circle cx="22.7" cy="648.5" r="1.4" fill="#22b422"/><polygon points="25.60,661.00 26.56,661.55 26.30,662.49 25.20,662.48 24.75,663.05 25.04,664.12 24.19,664.60 23.42,663.81 22.70,663.90 22.15,664.86 21.21,664.60 21.22,663.50 20.65,663.05 19.58,663.34 19.10,662.49 19.89,661.72 19.80,661.00 18.84,660.45 19.10,659.51 20.20,659.52 20.65,658.95 20.36,657.88 21.21,657.40 21.98,658.19 22.70,658.10 23.25,657.14 24.19,657.40 24.18,658.50 24.75,658.95 25.82,658.66 26.30,659.51 25.51,660.28" fill="#fff"/><circle cx="22.7" cy="661.0" r="1.4" fill="#22b422"/><rect x="36.9" y="645.3" width="16.9" height="17" rx="4" fill="#44c244"/><rect x="40.6" y="652.6" width="9.4" height="2.6" fill="#fff"/><text x="80.8" y="658.8" font-size="13" font-weight="bold" fill="#111" text-anchor="end" letter-spacing="0.3" xml:space="preserve">1,4</text><path d="M91.15,649.6999999999999 L99.15,657.6999999999999 M99.15,649.6999999999999 L91.15,657.6999999999999" stroke="#c4c4c4" stroke-width="3"/><rect x="76.8" y="677.8" width="28.700000000000003" height="19.4" rx="3" fill="#fff" stroke="#b8b8b8" stroke-width="1.2"/><rect x="31.2" y="677.8" width="53.599999999999994" height="19.4" fill="#8cf08c" stroke="#2aa82a" stroke-width="1.2"/><rect x="2.5" y="677.3" width="29" height="20.4" rx="3" fill="#22b422"/><polygon points="18.60,688.50 20.25,689.33 19.90,690.76 18.06,690.74 17.45,691.65 18.18,693.34 17.00,694.22 15.60,693.02 14.55,693.33 14.02,695.09 12.55,695.00 12.25,693.18 11.25,692.74 9.71,693.76 8.64,692.74 9.58,691.15 9.10,690.18 7.26,689.96 7.10,688.50 8.84,687.89 9.10,686.82 7.83,685.48 8.64,684.26 10.37,684.90 11.25,684.26 11.14,682.42 12.55,682.00 13.46,683.61 14.55,683.67 15.65,682.20 17.00,682.78 16.66,684.60 17.45,685.35 19.25,684.92 19.90,686.24 18.48,687.41" fill="#fff"/><circle cx="13.7" cy="688.5" r="2.4" fill="#22b422"/><polygon points="25.60,682.40 26.56,682.95 26.30,683.89 25.20,683.88 24.75,684.45 25.04,685.52 24.19,686.00 23.42,685.21 22.70,685.30 22.15,686.26 21.21,686.00 21.22,684.90 20.65,684.45 19.58,684.74 19.10,683.89 19.89,683.12 19.80,682.40 18.84,681.85 19.10,680.91 20.20,680.92 20.65,680.35 20.36,679.28 21.21,678.80 21.98,679.59 22.70,679.50 23.25,678.54 24.19,678.80 24.18,679.90 24.75,680.35 25.82,680.06 26.30,680.91 25.51,681.68" fill="#fff"/><circle cx="22.7" cy="682.4" r="1.4" fill="#22b422"/><polygon points="25.60,694.90 26.56,695.45 26.30,696.39 25.20,696.38 24.75,696.95 25.04,698.02 24.19,698.50 23.42,697.71 22.70,697.80 22.15,698.76 21.21,698.50 21.22,697.40 20.65,696.95 19.58,697.24 19.10,696.39 19.89,695.62 19.80,694.90 18.84,694.35 19.10,693.41 20.20,693.42 20.65,692.85 20.36,691.78 21.21,691.30 21.98,692.09 22.70,692.00 23.25,691.04 24.19,691.30 24.18,692.40 24.75,692.85 25.82,692.56 26.30,693.41 25.51,694.18" fill="#fff"/><circle cx="22.7" cy="694.9" r="1.4" fill="#22b422"/><rect x="36.9" y="679.1999999999999" width="16.9" height="17" rx="4" fill="#44c244"/><rect x="40.6" y="686.5" width="9.4" height="2.6" fill="#fff"/><text x="80.8" y="692.6999999999999" font-size="13" font-weight="bold" fill="#111" text-anchor="end" letter-spacing="0.3" xml:space="preserve">1,1</text><path d="M91.15,683.5999999999999 L99.15,691.5999999999999 M99.15,683.5999999999999 L91.15,691.5999999999999" stroke="#c4c4c4" stroke-width="3"/><rect x="78.7" y="708.8" width="26.799999999999997" height="19.4" rx="3" fill="#fff" stroke="#b8b8b8" stroke-width="1.2"/><rect x="31" y="708.8" width="55.7" height="19.4" fill="#ffe0e0" stroke="#e05050" stroke-width="1.2"/><rect x="2.5" y="708.3" width="29" height="20.4" rx="3" fill="#e04848"/><polygon points="18.60,719.50 20.25,720.33 19.90,721.76 18.06,721.74 17.45,722.65 18.18,724.34 17.00,725.22 15.60,724.02 14.55,724.33 14.02,726.09 12.55,726.00 12.25,724.18 11.25,723.74 9.71,724.76 8.64,723.74 9.58,722.15 9.10,721.18 7.26,720.96 7.10,719.50 8.84,718.89 9.10,717.82 7.83,716.48 8.64,715.26 10.37,715.90 11.25,715.26 11.14,713.42 12.55,713.00 13.46,714.61 14.55,714.67 15.65,713.20 17.00,713.78 16.66,715.60 17.45,716.35 19.25,715.92 19.90,717.24 18.48,718.41" fill="#fff"/><circle cx="13.7" cy="719.5" r="2.4" fill="#e04848"/><polygon points="25.60,713.40 26.56,713.95 26.30,714.89 25.20,714.88 24.75,715.45 25.04,716.52 24.19,717.00 23.42,716.21 22.70,716.30 22.15,717.26 21.21,717.00 21.22,715.90 20.65,715.45 19.58,715.74 19.10,714.89 19.89,714.12 19.80,713.40 18.84,712.85 19.10,711.91 20.20,711.92 20.65,711.35 20.36,710.28 21.21,709.80 21.98,710.59 22.70,710.50 23.25,709.54 24.19,709.80 24.18,710.90 24.75,711.35 25.82,711.06 26.30,711.91 25.51,712.68" fill="#fff"/><circle cx="22.7" cy="713.4" r="1.4" fill="#e04848"/><polygon points="25.60,725.90 26.56,726.45 26.30,727.39 25.20,727.38 24.75,727.95 25.04,729.02 24.19,729.50 23.42,728.71 22.70,728.80 22.15,729.76 21.21,729.50 21.22,728.40 20.65,727.95 19.58,728.24 19.10,727.39 19.89,726.62 19.80,725.90 18.84,725.35 19.10,724.41 20.20,724.42 20.65,723.85 20.36,722.78 21.21,722.30 21.98,723.09 22.70,723.00 23.25,722.04 24.19,722.30 24.18,723.40 24.75,723.85 25.82,723.56 26.30,724.41 25.51,725.18" fill="#fff"/><circle cx="22.7" cy="725.9" r="1.4" fill="#e04848"/><text x="35.1" y="724.0999999999999" font-size="13" fill="#111" xml:space="preserve">V:LIM  1</text><path d="M92.1,714.5999999999999 L100.1,722.5999999999999 M100.1,714.5999999999999 L92.1,722.5999999999999" stroke="#c4c4c4" stroke-width="3"/><rect x="65" y="743.9" width="28.700000000000003" height="19.4" rx="3" fill="#fff" stroke="#b8b8b8" stroke-width="1.2"/><rect x="31.2" y="743.9" width="41.8" height="19.4" fill="#8cf08c" stroke="#2aa82a" stroke-width="1.2"/><rect x="2.5" y="743.4" width="29" height="20.4" rx="3" fill="#22b422"/><polygon points="18.60,754.60 20.25,755.43 19.90,756.86 18.06,756.84 17.45,757.75 18.18,759.44 17.00,760.32 15.60,759.12 14.55,759.43 14.02,761.19 12.55,761.10 12.25,759.28 11.25,758.84 9.71,759.86 8.64,758.84 9.58,757.25 9.10,756.28 7.26,756.06 7.10,754.60 8.84,753.99 9.10,752.92 7.83,751.58 8.64,750.36 10.37,751.00 11.25,750.36 11.14,748.52 12.55,748.10 13.46,749.71 14.55,749.77 15.65,748.30 17.00,748.88 16.66,750.70 17.45,751.45 19.25,751.02 19.90,752.34 18.48,753.51" fill="#fff"/><circle cx="13.7" cy="754.6" r="2.4" fill="#22b422"/><polygon points="25.60,748.50 26.56,749.05 26.30,749.99 25.20,749.98 24.75,750.55 25.04,751.62 24.19,752.10 23.42,751.31 22.70,751.40 22.15,752.36 21.21,752.10 21.22,751.00 20.65,750.55 19.58,750.84 19.10,749.99 19.89,749.22 19.80,748.50 18.84,747.95 19.10,747.01 20.20,747.02 20.65,746.45 20.36,745.38 21.21,744.90 21.98,745.69 22.70,745.60 23.25,744.64 24.19,744.90 24.18,746.00 24.75,746.45 25.82,746.16 26.30,747.01 25.51,747.78" fill="#fff"/><circle cx="22.7" cy="748.5" r="1.4" fill="#22b422"/><polygon points="25.60,761.00 26.56,761.55 26.30,762.49 25.20,762.48 24.75,763.05 25.04,764.12 24.19,764.60 23.42,763.81 22.70,763.90 22.15,764.86 21.21,764.60 21.22,763.50 20.65,763.05 19.58,763.34 19.10,762.49 19.89,761.72 19.80,761.00 18.84,760.45 19.10,759.51 20.20,759.52 20.65,758.95 20.36,757.88 21.21,757.40 21.98,758.19 22.70,758.10 23.25,757.14 24.19,757.40 24.18,758.50 24.75,758.95 25.82,758.66 26.30,759.51 25.51,760.28" fill="#fff"/><circle cx="22.7" cy="761.0" r="1.4" fill="#22b422"/><rect x="36.9" y="745.3" width="16.9" height="17" rx="4" fill="#44c244"/><rect x="40.6" y="752.6" width="9.4" height="2.6" fill="#fff"/><text x="69" y="758.8" font-size="13" font-weight="bold" fill="#111" text-anchor="end" letter-spacing="0.3" xml:space="preserve">1</text><path d="M79.35,749.6999999999999 L87.35,757.6999999999999 M87.35,749.6999999999999 L79.35,757.6999999999999" stroke="#c4c4c4" stroke-width="3"/><rect x="1441" y="580.5" width="6" height="1" fill="#999"/><text x="1450.5" y="585.8" font-size="13.5" fill="#111" letter-spacing="0.12" xml:space="preserve">15.970</text><rect x="1441" y="630.1" width="6" height="1" fill="#999"/><text x="1450.5" y="635.4" font-size="13.5" fill="#111" letter-spacing="0.12" xml:space="preserve">15.960</text><rect x="1441" y="680.2" width="6" height="1" fill="#999"/><text x="1450.7" y="685.8000000000001" font-size="14" font-weight="bold" fill="#111" xml:space="preserve">15.950</text><rect x="1441" y="729.4" width="6" height="1" fill="#999"/><text x="1450.5" y="734.6999999999999" font-size="13.5" fill="#111" letter-spacing="0.12" xml:space="preserve">15.940</text><rect x="1441" y="779.4" width="6" height="1" fill="#999"/><text x="1450.5" y="784.6999999999999" font-size="13.5" fill="#111" letter-spacing="0.12" xml:space="preserve">15.930</text><rect x="1441" y="827.7" width="6" height="1" fill="#999"/><text x="1450.5" y="833.0" font-size="13.5" fill="#111" letter-spacing="0.12" xml:space="preserve">15.920</text><rect x="1441" y="877.8" width="6" height="1" fill="#999"/><text x="1450.5" y="883.0999999999999" font-size="13.5" fill="#111" letter-spacing="0.12" xml:space="preserve">15.910</text><rect x="1441" y="927.0" width="6" height="1" fill="#999"/><text x="1450.7" y="932.6" font-size="14" font-weight="bold" fill="#111" xml:space="preserve">15.900</text><rect x="1441" y="595.3" width="6" height="1.4" fill="#111"/><rect x="1447" y="587.8" width="61" height="16" fill="#f4f020" stroke="#d8d020" stroke-width="0.8"/><text x="1450.5" y="600.6" font-size="13" fill="#111" letter-spacing="0.45" xml:space="preserve">15.967,2</text><text x="5.4" y="937.6" font-size="13" fill="#111" letter-spacing="0.54" xml:space="preserve">IT-Finance.com - Tempo Reale</text><rect x="0" y="940.5" width="1442" height="1.3" fill="#a0a0a0"/><rect x="742.5" y="945.5" width="149" height="6" fill="#f4f020" stroke="#c8c8a0" stroke-width="0.8"/><rect x="817" y="941" width="1.2" height="5" fill="#111"/><rect x="51.7" y="941" width="1" height="3" fill="#a0a0a0"/><rect x="147.2" y="941" width="1" height="3" fill="#a0a0a0"/><rect x="244" y="941" width="1" height="3" fill="#a0a0a0"/><rect x="338" y="941" width="1" height="3" fill="#a0a0a0"/><rect x="434" y="941" width="1" height="3" fill="#a0a0a0"/><rect x="529" y="941" width="1" height="3" fill="#a0a0a0"/><rect x="625" y="941" width="1" height="3" fill="#a0a0a0"/><rect x="721" y="941" width="1" height="3" fill="#a0a0a0"/><rect x="913" y="941" width="1" height="3" fill="#a0a0a0"/><rect x="1008" y="941" width="1" height="3" fill="#a0a0a0"/><rect x="1104" y="941" width="1" height="3" fill="#a0a0a0"/><rect x="1199" y="941" width="1" height="3" fill="#a0a0a0"/><rect x="1295" y="941" width="1" height="3" fill="#a0a0a0"/><rect x="1391" y="941" width="1" height="3" fill="#a0a0a0"/><text x="34" y="956.2" font-size="13" font-weight="bold" fill="#111" letter-spacing="0.3" xml:space="preserve">09:40</text><text x="131" y="956.2" font-size="13" font-weight="bold" fill="#111" letter-spacing="0.3" xml:space="preserve">09:45</text><text x="227" y="956.2" font-size="13" font-weight="bold" fill="#111" letter-spacing="0.3" xml:space="preserve">09:50</text><text x="322" y="956.2" font-size="13" font-weight="bold" fill="#111" letter-spacing="0.3" xml:space="preserve">09:55</text><text x="426" y="956.2" font-size="13" font-weight="bold" fill="#111" letter-spacing="0.3" xml:space="preserve">10</text><text x="513" y="956.2" font-size="13" font-weight="bold" fill="#111" letter-spacing="0.3" xml:space="preserve">10:05</text><text x="608" y="956.2" font-size="13" font-weight="bold" fill="#111" letter-spacing="0.3" xml:space="preserve">10:10</text><text x="706" y="956.2" font-size="13" font-weight="bold" fill="#111" letter-spacing="0.3" xml:space="preserve">10:15</text><text x="897" y="956.2" font-size="13" font-weight="bold" fill="#111" letter-spacing="0.3" xml:space="preserve">10:25</text><text x="992" y="956.2" font-size="13" font-weight="bold" fill="#111" letter-spacing="0.3" xml:space="preserve">10:30</text><text x="1088" y="956.2" font-size="13" font-weight="bold" fill="#111" letter-spacing="0.3" xml:space="preserve">10:35</text><text x="1183" y="956.2" font-size="13" font-weight="bold" fill="#111" letter-spacing="0.3" xml:space="preserve">10:40</text><text x="1279" y="956.2" font-size="13" font-weight="bold" fill="#111" letter-spacing="0.3" xml:space="preserve">10:45</text><text x="1375" y="956.2" font-size="13" font-weight="bold" fill="#111" letter-spacing="0.3" xml:space="preserve">10:50</text><circle cx="1427" cy="951.2" r="9.8" fill="#4a7d40"/><circle cx="1427" cy="951.2" r="9.8" fill="none" stroke="#8ab080" stroke-width="0.8"/></g>
<rect x="1" y="0" width="1" height="796" fill="#9a9a9a"/><rect x="1508" y="0" width="1.8" height="796" fill="#7a7a7a"/>
</svg>
<svg style="left:0;top:0" width="1537" height="949" viewBox="0 0 1537 949">
<ellipse cx="262.6" cy="21" rx="40.2" ry="24.3" fill="none" stroke="#f5862a" stroke-width="4.8"/>
<rect x="567.4" y="1.6" width="150.35" height="26.8" fill="none" stroke="#f5862a" stroke-width="5"/>
<ellipse cx="262" cy="166.3" rx="39.2" ry="15.6" fill="none" stroke="#f5862a" stroke-width="5.4"/>
<rect x="565.5" y="152.65" width="153.1" height="32.45" fill="none" stroke="#f5862a" stroke-width="4.8"/>
</svg>
<div style="position:absolute;left:0;top:340px;width:1.6px;height:221px;background:#6abf6a"></div>
<div style="position:absolute;left:0;top:911px;width:1.6px;height:38px;background:#6abf6a"></div>
<svg style="left:1509px;top:147px" width="28" height="802" viewBox="1509 147 28 802">
<rect x="1510" y="151" width="27" height="163" fill="#f7f7f7"/>
<rect x="1510" y="314" width="27" height="125.5" fill="#f1f1f1"/>
<rect x="1510" y="313.5" width="27" height="1" fill="#e4e4e4"/>
<polygon points="1524.4,328.6 1529.7,321.4 1535,328.6" fill="#9a9a9a"/>
<rect x="1510" y="439.5" width="27" height="31" fill="#f9f9f9"/>
<rect x="1510" y="439" width="27" height="1" fill="#c8c8c8"/><rect x="1510" y="470" width="27" height="1" fill="#c0c0c0"/>
<path d="M1515.6,449.8 L1525.6,459.8 M1525.6,449.8 L1515.6,459.8" stroke="#a0a0a0" stroke-width="2"/>
<rect x="1510" y="471" width="27" height="478" fill="#ececec"/>
<rect x="1509" y="485.8" width="12.8" height="99" rx="3" fill="#f6f6f6" stroke="#c4c4c4" stroke-width="1"/>
<rect x="1510" y="584.5" width="13" height="1" fill="#c8c8c8"/>
<rect x="1509" y="589.1" width="8.6" height="17" rx="2" fill="#fafafa" stroke="#c0c0c0" stroke-width="1"/>
<path d="M1510.2,594.2 L1514.4,598.4" stroke="#111" stroke-width="1.6"/>
<rect x="1509" y="608" width="10.1" height="345" rx="3" fill="#f4f4f4" stroke="#c4c4c4" stroke-width="1"/>
<rect x="1521" y="608" width="1" height="341" fill="#bdbdbd"/>
</svg>
</body></html>
